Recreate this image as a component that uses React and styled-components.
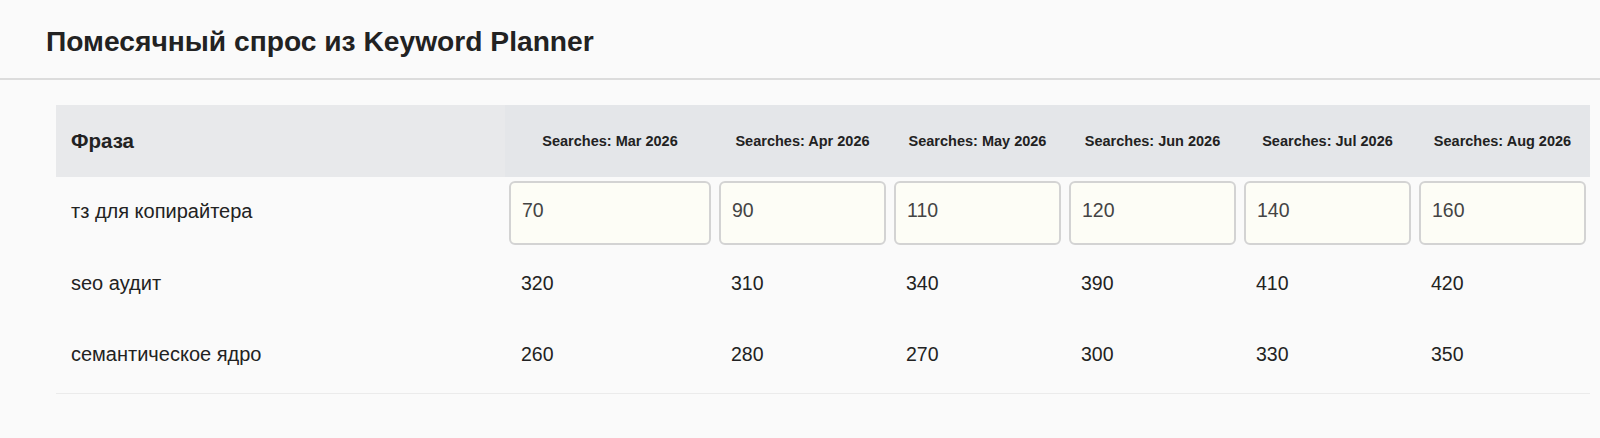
import React from 'react'
import styled, { createGlobalStyle } from 'styled-components'

const font = `"Liberation Sans", Arial, sans-serif`
const textColor = '#222'

const GlobalStyle = createGlobalStyle`
  html, body {
    margin: 0;
    padding: 0;
    background: #fafafa;
    font-family: ${font};
    color: ${textColor};
  }
`

const months = ['Mar', 'Apr', 'May', 'Jun', 'Jul', 'Aug']

const rows = [
  { phrase: 'тз для копирайтера', values: [70, 90, 110, 120, 140, 160], editable: true },
  { phrase: 'seo аудит', values: [320, 310, 340, 390, 410, 420] },
  { phrase: 'семантическое ядро', values: [260, 280, 270, 300, 330, 350] },
]

const Page = styled.div`
  min-height: 438px;
`

const Header = styled.header`
  height: 80px;
  box-sizing: border-box;
  padding: 25px 46px 0;
  border-bottom: 2px solid #dcdcdc;
`

const Title = styled.h1`
  margin: 0;
  font-size: 28.2px;
  line-height: 32px;
  font-weight: 700;
  color: ${textColor};
`

const Content = styled.main`
  padding: 25px 10px 0 56px;
`

const Table = styled.table`
  width: 1534px;
  table-layout: fixed;
  border-collapse: collapse;
  border-spacing: 0;
`

const Col = styled.col`
  width: ${props => props.$w}px;
`

const HeadCell = styled.th`
  height: 72px;
  padding: 0 ${props => (props.$phrase ? '15px' : '4px')};
  background: ${props => (props.$phrase ? '#e8e9eb' : '#e4e6e9')};
  text-align: ${props => (props.$phrase ? 'left' : 'center')};
  font-size: ${props => (props.$phrase ? '20.5px' : '14.5px')};
  font-weight: 700;
  color: ${textColor};
  white-space: nowrap;
`

const Row = styled.tr`
  &:last-child td {
    border-bottom: 1px solid #ebebeb;
  }
`

const Cell = styled.td`
  height: 72px;
  box-sizing: border-box;
  padding: ${props =>
    props.$input ? '4px' : props.$phrase ? '0 15px 4px' : '0 16px 4px'};
  font-size: ${props => (props.$phrase ? '20px' : '19.5px')};
  color: ${textColor};
  white-space: nowrap;
  vertical-align: middle;
`

const ValueInput = styled.input`
  display: block;
  width: 100%;
  height: 64px;
  box-sizing: border-box;
  margin: 0;
  padding: 0 11px 5px;
  border: 2px solid #d3d3d3;
  border-radius: 6px;
  background: #fdfdf6;
  font-family: ${font};
  font-size: 19.5px;
  color: #444;
  outline: none;
`

export default function App() {
  return (
    <Page>
      <GlobalStyle />
      <Header>
        <Title>Помесячный спрос из Keyword Planner</Title>
      </Header>
      <Content>
        <Table>
          <colgroup>
            <Col $w={449} />
            <Col $w={210} />
            {months.slice(1).map(m => (
              <Col key={m} $w={175} />
            ))}
          </colgroup>
          <thead>
            <tr>
              <HeadCell $phrase>Фраза</HeadCell>
              {months.map(m => (
                <HeadCell key={m}>Searches: {m} 2026</HeadCell>
              ))}
            </tr>
          </thead>
          <tbody>
            {rows.map(row => (
              <Row key={row.phrase}>
                <Cell $phrase>{row.phrase}</Cell>
                {row.values.map((v, i) =>
                  row.editable ? (
                    <Cell key={i} $input>
                      <ValueInput type="text" defaultValue={v} />
                    </Cell>
                  ) : (
                    <Cell key={i}>{v}</Cell>
                  )
                )}
              </Row>
            ))}
          </tbody>
        </Table>
      </Content>
    </Page>
  )
}
